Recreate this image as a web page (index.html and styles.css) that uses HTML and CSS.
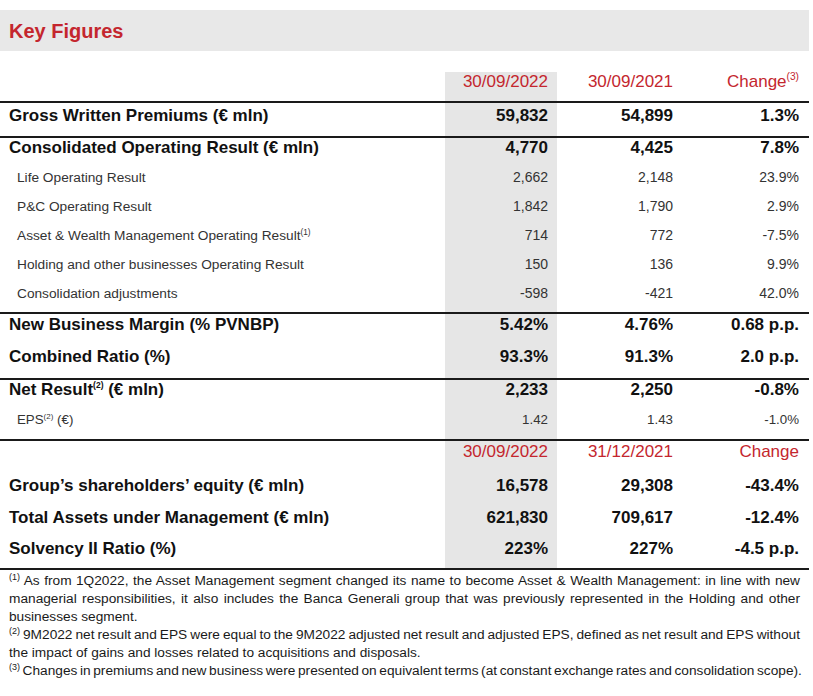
FILE: index.html
```html
<!DOCTYPE html>
<html lang="en">
<head>
<meta charset="utf-8">
<title>Key Figures</title>
<link rel="stylesheet" href="styles.css">
</head>
<body>
<div class="band"><h1 class="title">Key Figures</h1></div>

<div class="table">
  <div class="row hdr1">
    <div class="lab"></div>
    <div class="c cur red">30/09/2022</div>
    <div class="c red">30/09/2021</div>
    <div class="c red last">Change<sup>(3)</sup></div>
  </div>
  <div class="row big sep gwp">
    <div class="lab">Gross Written Premiums (€ mln)</div>
    <div class="c cur">59,832</div>
    <div class="c">54,899</div>
    <div class="c last">1.3%</div>
  </div>
  <div class="row big sep cor">
    <div class="lab">Consolidated Operating Result (€ mln)</div>
    <div class="c cur">4,770</div>
    <div class="c">4,425</div>
    <div class="c last">7.8%</div>
  </div>
  <div class="row sub">
    <div class="lab">Life Operating Result</div>
    <div class="c cur">2,662</div>
    <div class="c">2,148</div>
    <div class="c last">23.9%</div>
  </div>
  <div class="row sub">
    <div class="lab">P&amp;C Operating Result</div>
    <div class="c cur">1,842</div>
    <div class="c">1,790</div>
    <div class="c last">2.9%</div>
  </div>
  <div class="row sub">
    <div class="lab">Asset &amp; Wealth Management Operating Result<sup>(1)</sup></div>
    <div class="c cur">714</div>
    <div class="c">772</div>
    <div class="c last">-7.5%</div>
  </div>
  <div class="row sub">
    <div class="lab">Holding and other businesses Operating Result</div>
    <div class="c cur">150</div>
    <div class="c">136</div>
    <div class="c last">9.9%</div>
  </div>
  <div class="row sub subend">
    <div class="lab">Consolidation adjustments</div>
    <div class="c cur">-598</div>
    <div class="c">-421</div>
    <div class="c last">42.0%</div>
  </div>
  <div class="row big sep nbm">
    <div class="lab">New Business Margin (% PVNBP)</div>
    <div class="c cur">5.42%</div>
    <div class="c">4.76%</div>
    <div class="c last">0.68 p.p.</div>
  </div>
  <div class="row big cr">
    <div class="lab">Combined Ratio (%)</div>
    <div class="c cur">93.3%</div>
    <div class="c">91.3%</div>
    <div class="c last">2.0 p.p.</div>
  </div>
  <div class="row big sep net">
    <div class="lab">Net Result<sup class="sm">(2)</sup> (€ mln)</div>
    <div class="c cur">2,233</div>
    <div class="c">2,250</div>
    <div class="c last">-0.8%</div>
  </div>
  <div class="row eps">
    <div class="lab">EPS<sup>(2)</sup> (€)</div>
    <div class="c cur">1.42</div>
    <div class="c">1.43</div>
    <div class="c last">-1.0%</div>
  </div>
  <div class="row sep hdr2">
    <div class="lab"></div>
    <div class="c cur red">30/09/2022</div>
    <div class="c red">31/12/2021</div>
    <div class="c red last">Change</div>
  </div>
  <div class="row big grp">
    <div class="lab">Group’s shareholders’ equity (€ mln)</div>
    <div class="c cur">16,578</div>
    <div class="c">29,308</div>
    <div class="c last">-43.4%</div>
  </div>
  <div class="row big tam">
    <div class="lab">Total Assets under Management (€ mln)</div>
    <div class="c cur">621,830</div>
    <div class="c">709,617</div>
    <div class="c last">-12.4%</div>
  </div>
  <div class="row big sol">
    <div class="lab">Solvency II Ratio (%)</div>
    <div class="c cur">223%</div>
    <div class="c">227%</div>
    <div class="c last">-4.5 p.p.</div>
  </div>
</div>

<div class="notes">
  <span class="ln just"><sup>(1)</sup> As from 1Q2022, the Asset Management segment changed its name to become Asset &amp; Wealth Management: in line with new</span>
  <span class="ln just">managerial responsibilities, it also includes the Banca Generali group that was previously represented in the Holding and other</span>
  <span class="ln">businesses segment.</span>
  <span class="ln just tight"><sup>(2)</sup> 9M2022 net result and EPS were equal to the 9M2022 adjusted net result and adjusted EPS, defined as net result and EPS without</span>
  <span class="ln">the impact of gains and losses related to acquisitions and disposals.</span>
  <span class="ln tight"><sup>(3)</sup> Changes in premiums and new business were presented on equivalent terms (at constant exchange rates and consolidation scope).</span>
</div>
</body>
</html>
```
FILE: styles.css
```css
* { box-sizing: border-box; }
body {
  margin: 0;
  width: 813px;
  background: #fff;
  font-family: "Liberation Sans", Arial, sans-serif;
  color: #111;
}
.band {
  margin-top: 10px;
  width: 809px;
  height: 41px;
  background: #e8e8e8;
  display: flex;
  align-items: center;
  padding-left: 9px;
}
.title {
  margin: 0;
  font-size: 20px;
  font-weight: bold;
  color: #c4262e;
  line-height: 24px;
}
.table {
  margin-top: 19px;
  width: 809px;
}
.row {
  display: grid;
  grid-template-columns: 445px 112px 125px 127px;
  line-height: 20px;
}
.sep { border-top: 2px solid #1a1a1a; }
.lab { padding-left: 9px; white-space: nowrap; }
.c { text-align: right; padding-right: 9px; white-space: nowrap; }
.c.last { padding-right: 10px; }
.cur { background: #e6e6e6; }
.red { color: #c4262e; font-size: 17px; }
sup {
  font-size: 0.6em;
  line-height: 0;
  vertical-align: 0.65em;
}
sup.sm { font-size: 0.5em; vertical-align: 0.8em; }

.big { font-size: 17px; font-weight: bold; }
.sub { font-size: 13.7px; color: #333; height: 29px; line-height: 29px; }
.sub .lab { padding-left: 17px; }
.sub .c { font-size: 14px; }
.subend { height: 33px; }

.hdr1 { height: 31px; padding-top: 2px; }
.hdr1 .lab, .hdr2 .lab { background: #fff; }
.gwp { height: 35px; }
.gwp > div { padding-top: 3px; }
.cor { height: 27px; }
.nbm { height: 34px; }
.nbm > div { padding-top: 1px; }
.cr { height: 32px; }
.cr > div { padding-top: 1px; }
.net { height: 27px; }
.eps { height: 34px; line-height: 29px; font-size: 13.3px; color: #333; }
.eps .lab { padding-left: 17px; }
.hdr2 { height: 26px; }
.hdr2 > div { padding-top: 1px; }
.grp { height: 38px; }
.grp > div { padding-top: 11px; }
.tam { height: 31px; }
.tam > div { padding-top: 5px; }
.sol { height: 36px; border-bottom: 2px solid #1a1a1a; }
.sol > div { padding-top: 5px; }

.notes {
  width: 800px;
  padding: 2px 0 0 9px;
  font-size: 13.7px;
  line-height: 18px;
  color: #1a1a1a;
}
.ln { display: block; white-space: nowrap; }
.ln.just { white-space: normal; text-align: justify; text-align-last: justify; }
.tight { word-spacing: -1.2px; }
.notes sup { font-size: 9px; line-height: 0; vertical-align: 5px; }
```
